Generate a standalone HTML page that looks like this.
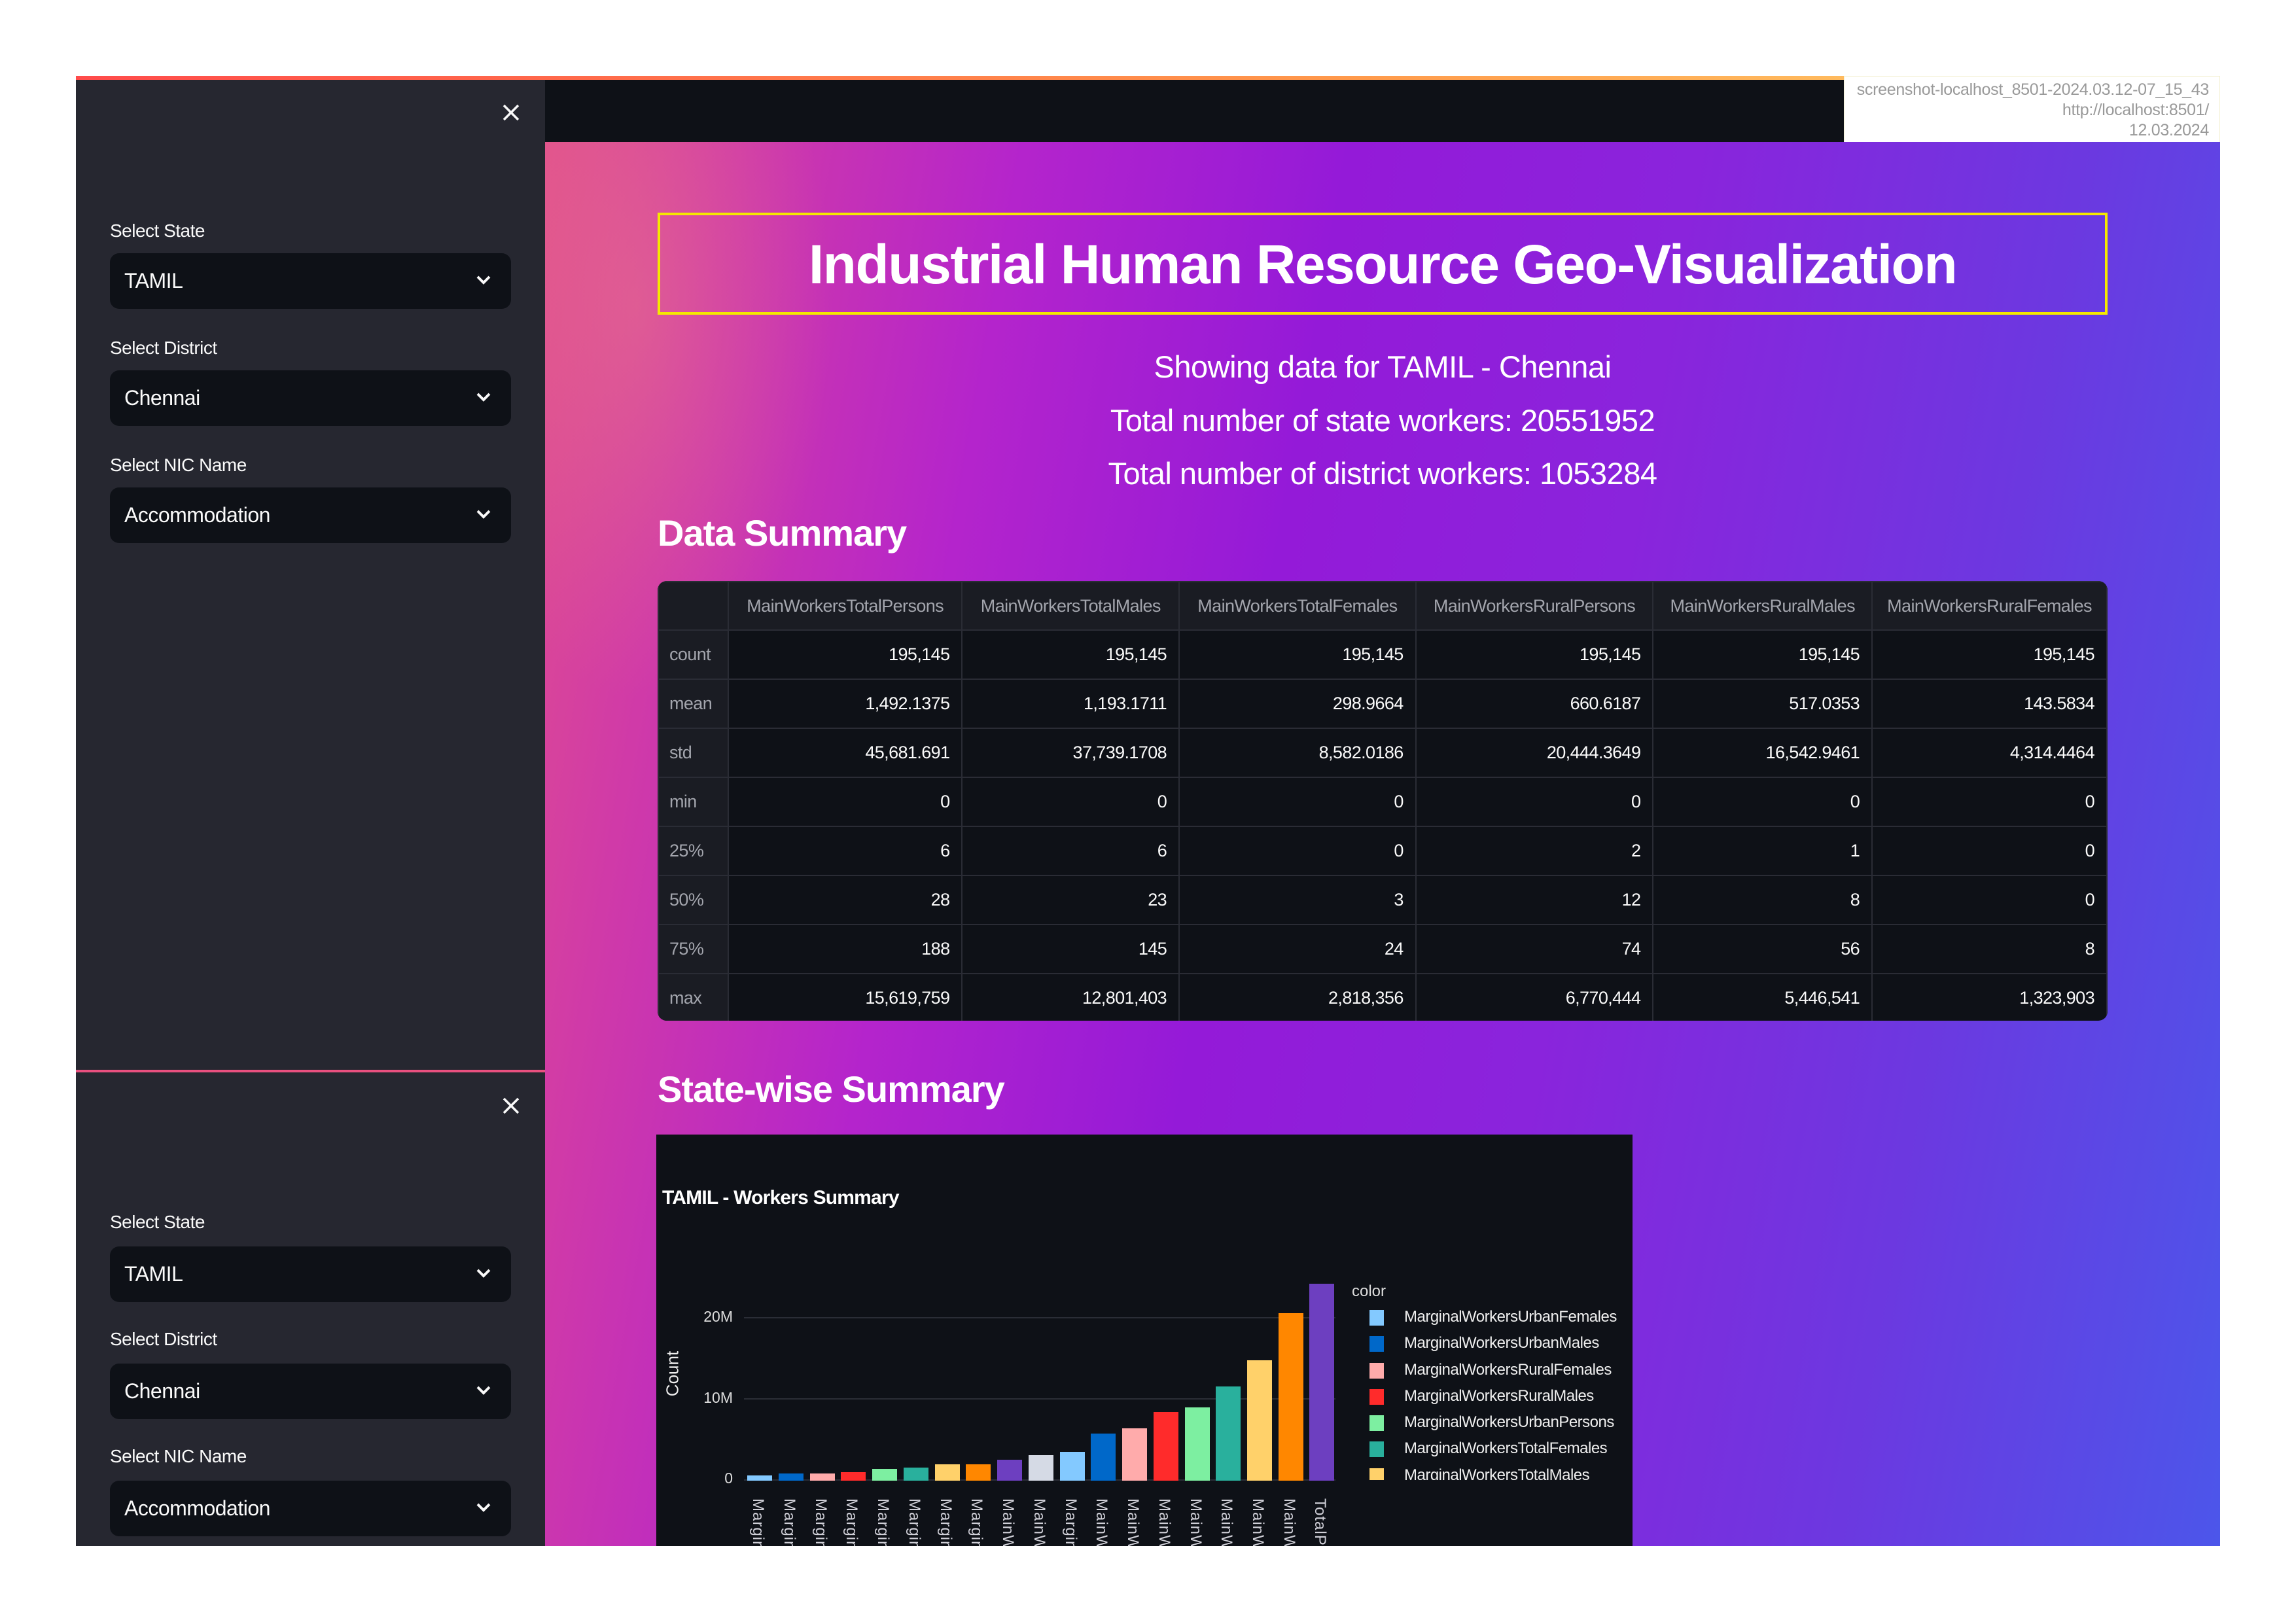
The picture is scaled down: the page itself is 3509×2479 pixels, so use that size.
<!DOCTYPE html>
<html><head><meta charset="utf-8"><style>
*{margin:0;padding:0;box-sizing:border-box}
body{width:3509px;height:2479px;background:#fff;position:relative;overflow:hidden;font-family:"Liberation Sans",sans-serif}
.abs{position:absolute}
.side{background:#262730}
.lbl{position:absolute;left:168px;color:#fafafa;font-size:28px;letter-spacing:-0.5px}
.sel{position:absolute;left:168px;width:613px;height:85px;background:#0e1117;border-radius:14px;color:#fafafa;font-size:32px;line-height:85px;padding-left:22px;letter-spacing:-0.5px}
.sel svg{position:absolute;right:30px;top:32px}
.x{position:absolute;left:766px;width:30px;height:30px}
table{border-collapse:collapse;font-size:27px;letter-spacing:-0.6px}
td,th{border:2px solid #2a2c35;height:75px;padding:0 18px;text-align:right;color:#fafafa;font-weight:normal}
th{color:#a3a5ad;background:#1a1c23;text-align:center;height:74px}
td.h{text-align:left;color:#a3a5ad;background:#1a1c23;padding-left:16px}
.bar{position:absolute;width:38px}
.xl{position:absolute;top:2294px;writing-mode:vertical-rl;color:#d0d0d8;font-size:24px;letter-spacing:1px}
.lg{position:absolute;left:2146px;color:#eee;font-size:24px;letter-spacing:-0.5px}
.sw{position:absolute;left:2093px;width:22px;height:24px}
</style></head><body>
<div class="abs" style="left:116px;top:116px;width:3277px;height:6px;background:linear-gradient(90deg,#ff4b4b,#ff9a4b 60%,#ffd36b)"></div>
<div class="abs" style="left:833px;top:122px;width:1985px;height:95px;background:#0e1117"></div>
<div class="abs" style="left:2818px;top:116px;width:575px;height:104px;background:#fff;border:1px solid #f3f0d0;color:#999;font-size:25px;text-align:right;padding:5px 16px 0 0;line-height:31px;letter-spacing:-0.3px">screenshot-localhost_8501-2024.03.12-07_15_43<br>http://localhost:8501/<br>12.03.2024</div>
<div class="abs" style="left:833px;top:217px;width:2560px;height:2146px;background:linear-gradient(100deg,#e04e8e 0%,#d03aa8 10%,#b424cc 25%,#941ad8 42%,#8a24dc 60%,#6c38e0 80%,#4c56ea 100%)"></div>
<div class="abs" style="left:833px;top:217px;width:2560px;height:2146px;background:radial-gradient(ellipse 300px 600px at 140px 250px,rgba(240,140,130,0.35),transparent)"></div>

<div class="abs side" style="left:116px;top:122px;width:717px;height:1513px"></div>
<div class="abs side" style="left:116px;top:1635px;width:717px;height:728px;border-top:4px solid #e9507f"></div>

<svg class="x" style="top:157px" viewBox="0 0 30 30"><path d="M4 4L26 26M26 4L4 26" stroke="#fafafa" stroke-width="3.5"/></svg>
<svg class="x" style="top:1675px" viewBox="0 0 30 30"><path d="M4 4L26 26M26 4L4 26" stroke="#fafafa" stroke-width="3.5"/></svg>

<div class="lbl" style="top:337px">Select State</div>
<div class="sel" style="top:387px">TAMIL<svg width="24" height="18" viewBox="0 0 24 18"><path d="M3 4L12 13L21 4" stroke="#fafafa" stroke-width="4" fill="none"/></svg></div>
<div class="lbl" style="top:516px">Select District</div>
<div class="sel" style="top:566px">Chennai<svg width="24" height="18" viewBox="0 0 24 18"><path d="M3 4L12 13L21 4" stroke="#fafafa" stroke-width="4" fill="none"/></svg></div>
<div class="lbl" style="top:695px">Select NIC Name</div>
<div class="sel" style="top:745px">Accommodation<svg width="24" height="18" viewBox="0 0 24 18"><path d="M3 4L12 13L21 4" stroke="#fafafa" stroke-width="4" fill="none"/></svg></div>

<div class="lbl" style="top:1852px">Select State</div>
<div class="sel" style="top:1905px">TAMIL<svg width="24" height="18" viewBox="0 0 24 18"><path d="M3 4L12 13L21 4" stroke="#fafafa" stroke-width="4" fill="none"/></svg></div>
<div class="lbl" style="top:2031px">Select District</div>
<div class="sel" style="top:2084px">Chennai<svg width="24" height="18" viewBox="0 0 24 18"><path d="M3 4L12 13L21 4" stroke="#fafafa" stroke-width="4" fill="none"/></svg></div>
<div class="lbl" style="top:2210px">Select NIC Name</div>
<div class="sel" style="top:2263px">Accommodation<svg width="24" height="18" viewBox="0 0 24 18"><path d="M3 4L12 13L21 4" stroke="#fafafa" stroke-width="4" fill="none"/></svg></div>

<div class="abs" style="left:1005px;top:325px;width:2216px;height:156px;border:4px solid #f5e800;color:#fff;font-weight:bold;font-size:84px;line-height:150px;text-align:center;letter-spacing:-1.5px">Industrial Human Resource Geo-Visualization</div>
<div class="abs" style="left:1005px;top:520px;width:2216px;color:#fff;font-size:47px;text-align:center;line-height:81.5px;letter-spacing:-0.5px">Showing data for TAMIL - Chennai<br>Total number of state workers: 20551952<br>Total number of district workers: 1053284</div>
<div class="abs" style="left:1005px;top:782px;color:#fff;font-weight:bold;font-size:56px;letter-spacing:-1px">Data Summary</div>

<div class="abs" style="left:1005px;top:888px;width:2216px;height:672px;background:#0e1117;border-radius:14px;overflow:hidden">
<table style="width:2216px">
<colgroup><col style="width:107px"><col style="width:358px"><col style="width:332px"><col style="width:362px"><col style="width:363px"><col style="width:335px"><col style="width:359px"></colgroup>
<tr><th></th><th>MainWorkersTotalPersons</th><th>MainWorkersTotalMales</th><th>MainWorkersTotalFemales</th><th>MainWorkersRuralPersons</th><th>MainWorkersRuralMales</th><th>MainWorkersRuralFemales</th></tr>
<tr><td class="h">count</td><td>195,145</td><td>195,145</td><td>195,145</td><td>195,145</td><td>195,145</td><td>195,145</td></tr>
<tr><td class="h">mean</td><td>1,492.1375</td><td>1,193.1711</td><td>298.9664</td><td>660.6187</td><td>517.0353</td><td>143.5834</td></tr>
<tr><td class="h">std</td><td>45,681.691</td><td>37,739.1708</td><td>8,582.0186</td><td>20,444.3649</td><td>16,542.9461</td><td>4,314.4464</td></tr>
<tr><td class="h">min</td><td>0</td><td>0</td><td>0</td><td>0</td><td>0</td><td>0</td></tr>
<tr><td class="h">25%</td><td>6</td><td>6</td><td>0</td><td>2</td><td>1</td><td>0</td></tr>
<tr><td class="h">50%</td><td>28</td><td>23</td><td>3</td><td>12</td><td>8</td><td>0</td></tr>
<tr><td class="h">75%</td><td>188</td><td>145</td><td>24</td><td>74</td><td>56</td><td>8</td></tr>
<tr><td class="h">max</td><td>15,619,759</td><td>12,801,403</td><td>2,818,356</td><td>6,770,444</td><td>5,446,541</td><td>1,323,903</td></tr>
</table></div>

<div class="abs" style="left:1005px;top:1632px;color:#fff;font-weight:bold;font-size:56px;letter-spacing:-1px">State-wise Summary</div>

<div class="abs" style="left:1003px;top:1734px;width:1492px;height:629px;background:#0e1117;overflow:hidden">
<div class="abs" style="left:9px;top:80px;color:#fff;font-weight:bold;font-size:30px;letter-spacing:-0.8px">TAMIL - Workers Summary</div>
</div>
<div class="abs" style="left:1137px;top:2013px;width:904px;height:2px;background:#2a2d36"></div>
<div class="abs" style="left:1137px;top:2137px;width:904px;height:2px;background:#2a2d36"></div>
<div class="abs" style="left:1137px;top:2261px;width:904px;height:2px;background:#2a2d36"></div>
<div class="abs" style="left:1060px;top:1999px;width:60px;text-align:right;color:#ddd;font-size:23px">20M</div>
<div class="abs" style="left:1060px;top:2123px;width:60px;text-align:right;color:#ddd;font-size:23px">10M</div>
<div class="abs" style="left:1060px;top:2246px;width:60px;text-align:right;color:#ddd;font-size:23px">0</div>
<div class="abs" style="left:988px;top:2084px;transform:rotate(-90deg);color:#eee;font-size:26px;width:80px;text-align:center">Count</div>

<div class="bar" style="left:1142px;top:2255px;height:8px;background:#83c9ff"></div>
<div class="bar" style="left:1190px;top:2252px;height:11px;background:#0068c9"></div>
<div class="bar" style="left:1238px;top:2252px;height:11px;background:#ffabab"></div>
<div class="bar" style="left:1285px;top:2250px;height:13px;background:#ff2b2b"></div>
<div class="bar" style="left:1333px;top:2245px;height:18px;background:#7defa1"></div>
<div class="bar" style="left:1381px;top:2243px;height:20px;background:#29b09d"></div>
<div class="bar" style="left:1429px;top:2238px;height:25px;background:#ffd16a"></div>
<div class="bar" style="left:1476px;top:2238px;height:25px;background:#ff8700"></div>
<div class="bar" style="left:1524px;top:2231px;height:32px;background:#6d3fc0"></div>
<div class="bar" style="left:1572px;top:2224px;height:39px;background:#d5dae5"></div>
<div class="bar" style="left:1620px;top:2219px;height:44px;background:#83c9ff"></div>
<div class="bar" style="left:1667px;top:2191px;height:72px;background:#0068c9"></div>
<div class="bar" style="left:1715px;top:2183px;height:80px;background:#ffabab"></div>
<div class="bar" style="left:1763px;top:2158px;height:105px;background:#ff2b2b"></div>
<div class="bar" style="left:1811px;top:2151px;height:112px;background:#7defa1"></div>
<div class="bar" style="left:1858px;top:2119px;height:144px;background:#29b09d"></div>
<div class="bar" style="left:1906px;top:2079px;height:184px;background:#ffd16a"></div>
<div class="bar" style="left:1954px;top:2007px;height:256px;background:#ff8700"></div>
<div class="bar" style="left:2001px;top:1962px;height:301px;background:#6d3fc0"></div>

<div class="abs" style="left:1130px;top:2286px;width:920px;height:77px;overflow:hidden">
<div class="xl" style="left:14px;top:4px">Marginal</div><div class="xl" style="left:62px;top:4px">Marginal</div><div class="xl" style="left:110px;top:4px">Marginal</div><div class="xl" style="left:157px;top:4px">Marginal</div><div class="xl" style="left:205px;top:4px">Marginal</div><div class="xl" style="left:253px;top:4px">Marginal</div><div class="xl" style="left:301px;top:4px">Marginal</div><div class="xl" style="left:348px;top:4px">Marginal</div><div class="xl" style="left:396px;top:4px">MainWork</div><div class="xl" style="left:444px;top:4px">MainWork</div><div class="xl" style="left:492px;top:4px">Marginal</div><div class="xl" style="left:539px;top:4px">MainWork</div><div class="xl" style="left:587px;top:4px">MainWork</div><div class="xl" style="left:635px;top:4px">MainWork</div><div class="xl" style="left:683px;top:4px">MainWork</div><div class="xl" style="left:730px;top:4px">MainWork</div><div class="xl" style="left:778px;top:4px">MainWork</div><div class="xl" style="left:826px;top:4px">MainWork</div><div class="xl" style="left:873px;top:4px">TotalPop</div>
</div>

<div class="abs" style="left:2066px;top:1960px;color:#ddd;font-size:24px">color</div>
<div class="abs" style="left:2080px;top:1997px;width:415px;height:265px;overflow:hidden">
<div class="sw" style="left:13px;top:5px;background:#83c9ff"></div><div class="lg" style="left:66px;top:2px">MarginalWorkersUrbanFemales</div>
<div class="sw" style="left:13px;top:45px;background:#0068c9"></div><div class="lg" style="left:66px;top:42px">MarginalWorkersUrbanMales</div>
<div class="sw" style="left:13px;top:86px;background:#ffabab"></div><div class="lg" style="left:66px;top:83px">MarginalWorkersRuralFemales</div>
<div class="sw" style="left:13px;top:126px;background:#ff2b2b"></div><div class="lg" style="left:66px;top:123px">MarginalWorkersRuralMales</div>
<div class="sw" style="left:13px;top:166px;background:#7defa1"></div><div class="lg" style="left:66px;top:163px">MarginalWorkersUrbanPersons</div>
<div class="sw" style="left:13px;top:206px;background:#29b09d"></div><div class="lg" style="left:66px;top:203px">MarginalWorkersTotalFemales</div>
<div class="sw" style="left:13px;top:247px;background:#ffd16a"></div><div class="lg" style="left:66px;top:244px">MarginalWorkersTotalMales</div>
</div>
</body></html>
